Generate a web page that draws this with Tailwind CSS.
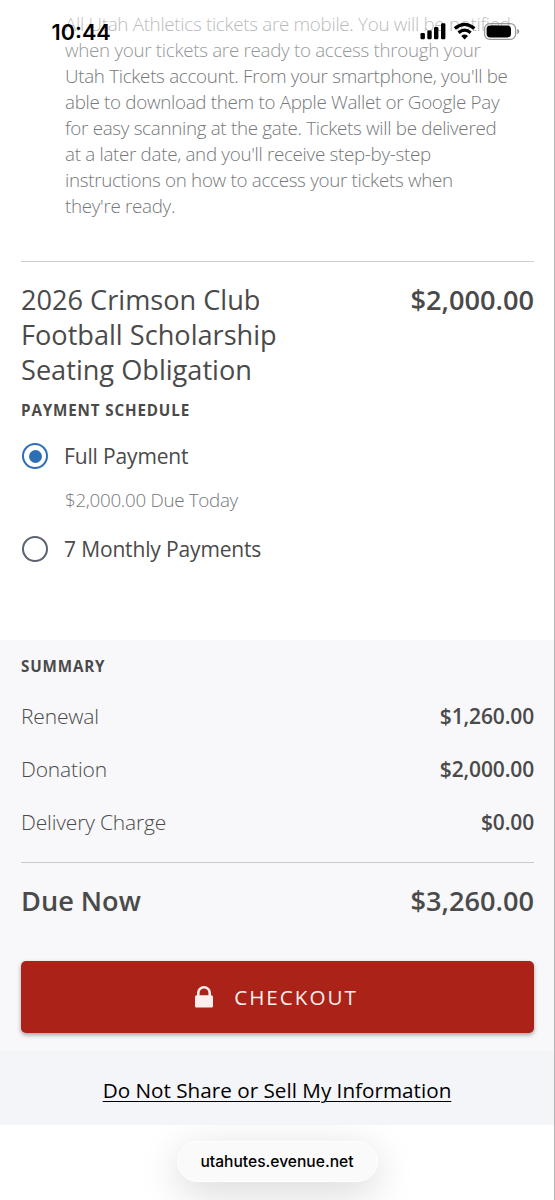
<!DOCTYPE html>
<html lang="en">
<head>
<meta charset="utf-8">
<title>Checkout</title>
<script src="https://cdn.jsdelivr.net/npm/@tailwindcss/browser@4"></script>
</head>
<body class="bg-white">
<div class="relative flex h-[1200px] w-[555px] flex-col overflow-hidden border-r border-[#b4b4b6] bg-white font-['Open_Sans','Noto_Sans',sans-serif] text-[#4a4a4a]">
  <main class="flex h-[640px] flex-col pl-[21px] pr-5">
    <p class="h-[248px] pt-[11px] pl-11 text-[18.8px] leading-[26px] font-light tracking-[-0.3px] whitespace-nowrap text-[#75787b]">All Utah Athletics tickets are mobile. You will be notified<br>when your tickets are ready to access through your<br>Utah Tickets account. From your smartphone, you'll be<br>able to download them to Apple Wallet or Google Pay<br>for easy scanning at the gate. Tickets will be delivered<br>at a later date, and you'll receive step-by-step<br>instructions on how to access your tickets when<br>they're ready.</p>
    <hr class="mt-[13px] h-px shrink-0 border-0 bg-[#cfcfcf]">
    <section class="mt-5 flex justify-between text-[27.15px] leading-[35px] whitespace-nowrap">
      <h2>2026 Crimson Club<br>Football Scholarship<br>Seating Obligation</h2>
      <span class="font-semibold">$2,000.00</span>
    </section>
    <h3 class="mt-[11px] text-[15.2px] leading-6 font-bold tracking-[0.85px]">PAYMENT SCHEDULE</h3>
    <div class="mt-[19px] flex h-[30px] items-center gap-[15px] pl-px">
      <span class="flex size-[26px] items-center justify-center rounded-full border-[2.5px] border-[#2e6fb4]"><span class="size-[13px] rounded-full bg-[#2e6fb4]"></span></span>
      <span class="ml-px text-[21px] leading-[30px] tracking-[-0.15px]">Full Payment</span>
    </div>
    <p class="mt-[14px] ml-11 text-[18.8px] leading-[30px] font-light tracking-[-0.3px] text-[#75787b]">$2,000.00 Due Today</p>
    <div class="mt-[19px] flex h-[30px] items-center gap-[15px] pl-px">
      <span class="size-[26px] rounded-full border-[2.5px] border-[#5b6270]"></span>
      <span class="ml-px text-[21px] leading-[30px] tracking-[-0.15px]">7 Monthly Payments</span>
    </div>
  </main>
  <section class="flex h-[411px] flex-col bg-[#f8f8fa] pt-[14px] pr-5 pl-[21px]">
    <h3 class="text-[15.2px] leading-6 font-bold tracking-[0.85px]">SUMMARY</h3>
    <dl class="mt-3 text-[21px] leading-[53px] tracking-[-0.15px]">
      <div class="flex justify-between"><dt class="font-light">Renewal</dt><dd class="font-semibold">$1,260.00</dd></div>
      <div class="flex justify-between"><dt class="font-light">Donation</dt><dd class="font-semibold">$2,000.00</dd></div>
      <div class="flex justify-between"><dt class="font-light">Delivery Charge</dt><dd class="font-semibold">$0.00</dd></div>
    </dl>
    <hr class="mt-[13px] h-px shrink-0 border-0 bg-[#c9c9cc]">
    <div class="mt-[18px] flex justify-between text-[27.15px] leading-10 font-semibold"><span>Due Now</span><span>$3,260.00</span></div>
    <button class="mt-10 flex h-[72px] w-full shrink-0 items-center justify-center rounded-[5px] bg-[#ab2318] pr-0.5 text-[20.6px] tracking-[2px] text-[#fbeeed] shadow-[0_2px_4px_rgba(0,0,0,0.35)]">
      <svg class="mr-[21px] h-[22px] w-[18px]" viewBox="0 0 18 22"><rect y="9.3" width="18" height="12.2" rx="1.6" fill="#fbeeed"/><path d="M3.3 10V6.7a5.7 5.4 0 0 1 11.4 0V10" fill="none" stroke="#fbeeed" stroke-width="2.6"/></svg>
      <span>CHECKOUT</span>
    </button>
  </section>
  <footer class="flex h-[74px] items-center justify-center bg-[#f4f5f9] pt-1.5 text-[20.7px] text-black"><a class="underline decoration-1 underline-offset-[3px]">Do Not Share or Sell My Information</a></footer>
  <div class="relative flex grow justify-center overflow-hidden bg-white pt-4">
    <div class="flex h-[41px] w-[201px] items-center justify-center rounded-full border border-white bg-[#fafafa] font-['Inter',sans-serif] text-[15.6px] font-medium text-black shadow-[0_10px_40px_rgba(0,0,0,0.16)]">utahutes.evenue.net</div>
  </div>
  <header class="absolute inset-x-0 top-0 h-[72px] bg-gradient-to-b from-white/70 via-white/40 to-white/0 text-black">
    <span class="absolute top-[18px] left-[51.5px] font-['Inter',sans-serif] text-[21.7px] leading-7 font-semibold">10:44</span>
    <svg class="absolute top-[22px] left-[420px]" width="101" height="20" viewBox="0 0 101 20">
      <rect x="0.5" y="11" width="4.4" height="6.3" rx="1.2"/><rect x="7.3" y="8.5" width="4.4" height="8.8" rx="1.2"/><rect x="14" y="5" width="4.4" height="12.3" rx="1.2"/><rect x="21" y="1.3" width="4.4" height="16" rx="1.2"/>
      <g fill="none" stroke="#000" stroke-width="3.2"><path d="M34.8 6.5Q44.6-1.7 54.4 6.5"/><path d="M38.6 10.7Q44.6 5.6 50.6 10.7"/></g>
      <path d="M41.2 13.9Q44.6 11.2 48 13.9L44.6 17.5z"/>
      <rect x="64.6" y="1.6" width="31" height="15.8" rx="5.2" fill="none" stroke="#999" stroke-width="1.3"/><rect x="66.6" y="3.6" width="24.4" height="11.8" rx="3.6"/><path d="M97.2 6.8q2.1.8 2.1 2.7t-2.1 2.7z" fill="#999"/>
    </svg>
  </header>
</div>
</body>
</html>
